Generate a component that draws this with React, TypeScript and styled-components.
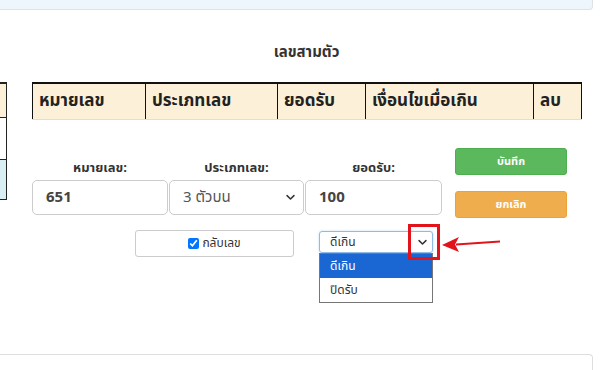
import styled, { createGlobalStyle } from 'styled-components';

const GlobalStyle = createGlobalStyle`
	body {
		margin: 0;
		background: #fff;
		font-family: Tahoma, "Noto Sans Thai", "Noto Sans", "DejaVu Sans", sans-serif;
		color: #333;
		overflow: hidden;
	}
`;

const TopPanel = styled.div`
	width: 592px;
	height: 9px;
	background: #eef6fd;
	border-bottom: 1px solid #dde2e6;
	border-right: 1px solid #dde2e6;
	border-bottom-right-radius: 4px;
`;

const Title = styled.div`
	width: 549px;
	margin: 33px 0 0 32px;
	text-align: center;
	font-size: 15px;
	font-weight: bold;
	line-height: 19px;
	color: #333;
`;

const Row = styled.div`
	display: flex;
	margin-top: 20px;
`;

const SideTable = styled.div`
	width: 8px;
	overflow: hidden;
	flex: none;
`;

const SideCell = styled.div<{ $bg: string; $h: number }>`
	width: 60px;
	margin-left: -53px;
	height: ${(p) => p.$h}px;
	background: ${(p) => p.$bg};
	border: 1px solid #222;
	border-top-width: ${(p) => (p.$bg === '#fdf0d8' ? 2 : 0)}px;
	box-sizing: border-box;
`;

const Main = styled.div`
	margin-left: 24px;
	width: 549px;
`;

const Table = styled.table`
	width: 549px;
	border-collapse: collapse;
	table-layout: fixed;
`;

const Th = styled.th<{ $w: number }>`
	width: ${(p) => p.$w}px;
	height: 36px;
	padding: 0 0 0 6px;
	box-sizing: border-box;
	background: #fdf0d8;
	border-top: 2px solid #111;
	border-left: 1px solid #111;
	border-right: 1px solid #111;
	border-bottom: 1px solid #dedede;
	text-align: left;
	font-size: 17px;
	font-weight: bold;
	color: #222;
`;

const FormRow = styled.div`
	display: flex;
	margin-top: 28px;
`;

const Fields = styled.div`
	display: flex;
	gap: 1px;
	padding-top: 12px;
`;

const Field = styled.div<{ $w: number }>`
	width: ${(p) => p.$w}px;
	display: flex;
	flex-direction: column;
`;

const Label = styled.label`
	display: block;
	text-align: center;
	font-size: 13px;
	font-weight: bold;
	line-height: 16px;
	margin-bottom: 4px;
	color: #333;
`;

const TextInput = styled.input<{ $bold?: boolean }>`
	height: 35px;
	box-sizing: border-box;
	border: 1px solid #ccc;
	border-radius: 5px;
	padding: 0 13px;
	font-family: inherit;
	font-size: 15px;
	font-weight: ${(p) => (p.$bold ? 'bold' : 'normal')};
	color: #444;
	outline: none;
`;

const SelectWrap = styled.div`
	position: relative;
	height: 35px;
`;

const Select = styled.select`
	width: 100%;
	height: 35px;
	box-sizing: border-box;
	border: 1px solid #ccc;
	border-radius: 5px;
	padding: 0 13px;
	appearance: none;
	background: #fff;
	font-family: inherit;
	font-size: 15px;
	color: #555;
	outline: none;
`;

const Chevron = styled.svg<{ $right: number }>`
	position: absolute;
	right: ${(p) => p.$right}px;
	top: 50%;
	transform: translateY(-50%);
	pointer-events: none;
`;

const Buttons = styled.div`
	margin-left: 13px;
	width: 112px;
	display: flex;
	flex-direction: column;
	gap: 16px;
`;

const Button = styled.button<{ $bg: string; $border: string }>`
	height: 27px;
	border: 1px solid ${(p) => p.$border};
	border-radius: 3px;
	background: ${(p) => p.$bg};
	color: #fff;
	font-family: inherit;
	font-size: 11px;
	font-weight: bold;
	cursor: pointer;
`;

const OptionRow = styled.div`
	display: flex;
	align-items: flex-start;
	margin: 12px 0 0 135px;
	gap: 25px;
`;

const CheckBox = styled.label`
	width: 159px;
	height: 27px;
	box-sizing: border-box;
	border: 1px solid #ccc;
	border-radius: 3px;
	display: flex;
	align-items: center;
	justify-content: center;
	gap: 3px;
	font-size: 12px;
	color: #333;

	input {
		width: 11px;
		height: 11px;
		margin: 0;
	}
`;

const OverWrap = styled.div`
	position: relative;
	width: 114px;
	height: 22px;
	margin-top: 1px;
`;

const SmallSelect = styled.div`
	height: 22px;
	box-sizing: border-box;
	border: 1px solid #8fbbe6;
	border-radius: 3px;
	box-shadow: 0 0 2px rgba(102, 175, 233, 0.5);
	padding: 0 10px;
	display: flex;
	align-items: center;
	font-size: 12px;
	color: #333;
`;

const DropList = styled.div`
	position: absolute;
	top: 22px;
	left: 0;
	width: 114px;
	box-sizing: border-box;
	border: 1px solid #767676;
	background: #fff;
`;

const DropItem = styled.div<{ $active?: boolean }>`
	height: 24px;
	padding: 0 10px;
	display: flex;
	align-items: center;
	font-size: 12px;
	background: ${(p) => (p.$active ? '#1a66d2' : '#fff')};
	color: ${(p) => (p.$active ? '#fff' : '#333')};
`;

const RedBox = styled.div`
	position: absolute;
	left: 89px;
	top: -7px;
	width: 32px;
	height: 36px;
	box-sizing: border-box;
	border: 3px solid #e3131b;
`;

const Arrow = styled.svg`
	position: absolute;
	left: 121px;
	top: 2px;
`;

const BottomPanel = styled.div`
	width: 592px;
	height: 40px;
	margin-top: 97px;
	border-top: 1px solid #dedede;
	border-right: 1px solid #dedede;
	border-top-right-radius: 4px;
`;

const columns = [
	{ label: 'หมายเลข', w: 113 },
	{ label: 'ประเภทเลข', w: 132 },
	{ label: 'ยอดรับ', w: 88 },
	{ label: 'เงื่อนไขเมื่อเกิน', w: 168 },
	{ label: 'ลบ', w: 48 },
];

const ChevronIcon = ({ right, size }: { right: number; size: number }) => (
	<Chevron $right={right} width={size} height={size} viewBox="0 0 16 16">
		<path d="M3 6l5 5 5-5" fill="none" stroke="#333" strokeWidth="2.2" strokeLinecap="round" strokeLinejoin="round" />
	</Chevron>
);

const App = () => {
	return (
		<>
			<GlobalStyle />
			<TopPanel />
			<Title>เลขสามตัว</Title>
			<Row>
				<SideTable>
					<SideCell $bg="#fdf0d8" $h={36} />
					<SideCell $bg="#fff" $h={42} />
					<SideCell $bg="#d9eef2" $h={40} />
				</SideTable>
				<Main>
					<Table>
						<thead>
							<tr>
								{columns.map((c) => (
									<Th key={c.label} $w={c.w}>
										{c.label}
									</Th>
								))}
							</tr>
						</thead>
					</Table>
					<FormRow>
						<Fields>
							<Field $w={136}>
								<Label>หมายเลข:</Label>
								<TextInput $bold defaultValue="651" />
							</Field>
							<Field $w={135}>
								<Label>ประเภทเลข:</Label>
								<SelectWrap>
									<Select defaultValue="3top">
										<option value="3top">3 ตัวบน</option>
										<option value="3tod">3 ตัวโต๊ด</option>
									</Select>
									<ChevronIcon right={8} size={11} />
								</SelectWrap>
							</Field>
							<Field $w={137}>
								<Label>ยอดรับ:</Label>
								<TextInput $bold defaultValue="100" />
							</Field>
						</Fields>
						<Buttons>
							<Button $bg="#5cb85c" $border="#4cae4c">บันทึก</Button>
							<Button $bg="#f0ad4e" $border="#eea236">ยกเลิก</Button>
						</Buttons>
					</FormRow>
				</Main>
			</Row>
			<OptionRow>
				<CheckBox>
					<input type="checkbox" defaultChecked />
					กลับเลข
				</CheckBox>
				<OverWrap>
					<SmallSelect>ดีเกิน</SmallSelect>
					<ChevronIcon right={5} size={11} />
					<DropList>
						<DropItem $active>ดีเกิน</DropItem>
						<DropItem>ปิดรับ</DropItem>
					</DropList>
					<RedBox />
					<Arrow width="64" height="22" viewBox="0 0 64 22">
						<path d="M60 7.5 L16 10.5 L16 12.5 L60 9.5 Z" fill="#e3131b" />
						<path d="M2 12 L19 4 L15 11.5 L19 19 Z" fill="#e3131b" />
					</Arrow>
				</OverWrap>
			</OptionRow>
			<BottomPanel />
		</>
	);
};

export default App;
